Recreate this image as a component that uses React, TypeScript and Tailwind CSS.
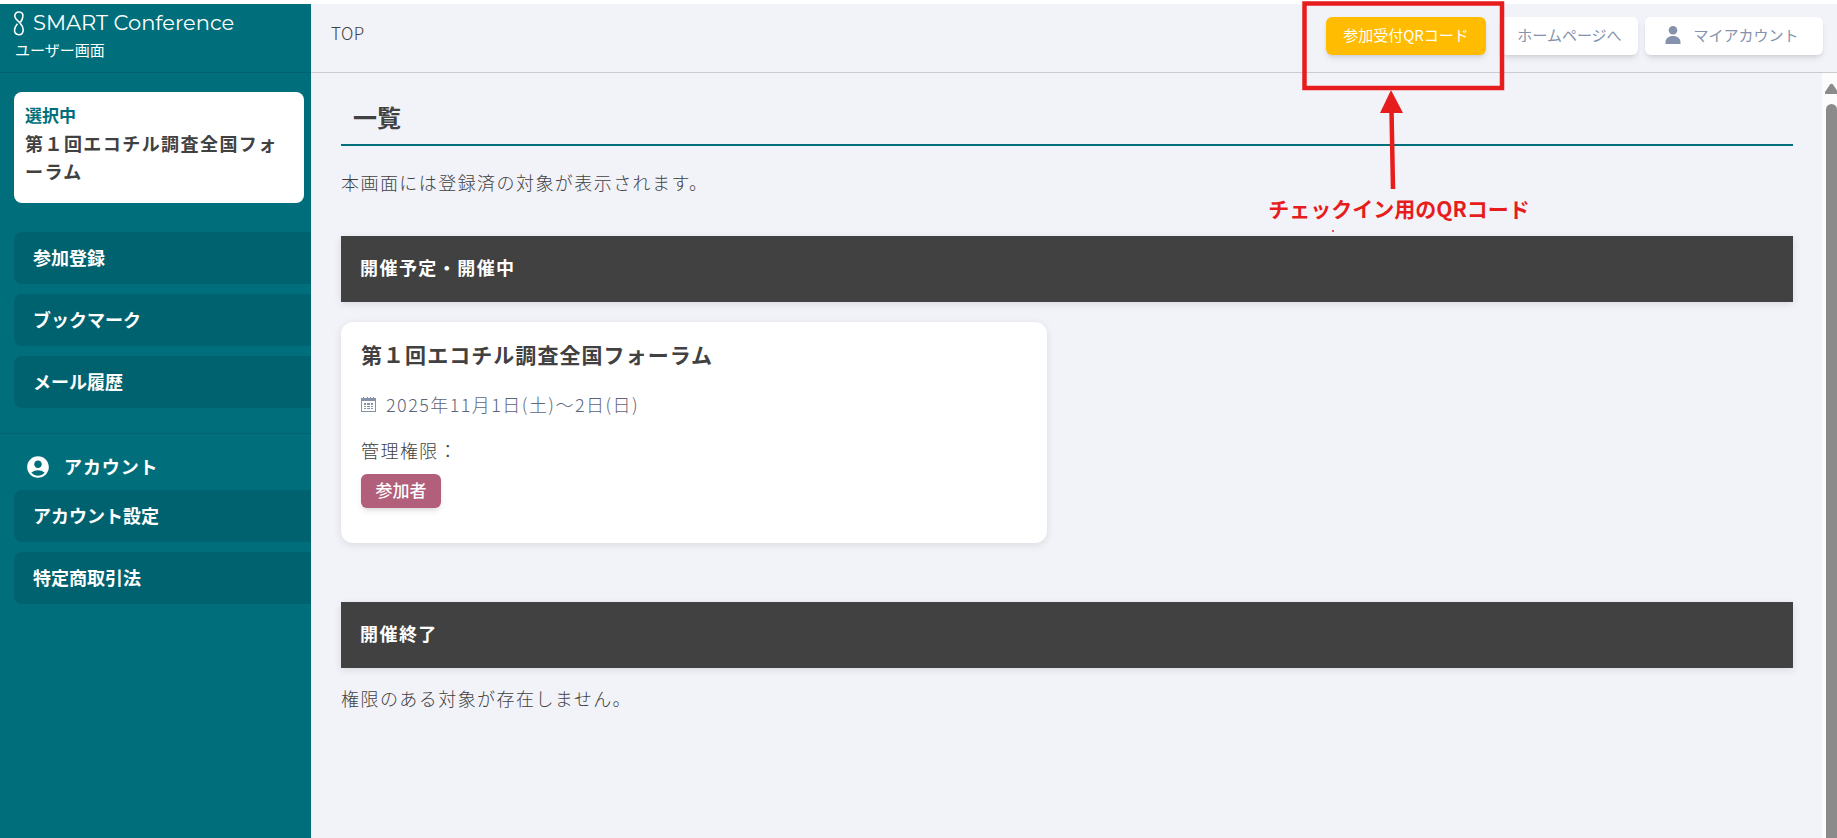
import { MdAccountCircle } from "react-icons/md";

const mainMenu = ["参加登録", "ブックマーク", "メール履歴"];
const accountMenu = ["アカウント設定", "特定商取引法"];

function LogoMark() {
  return (
    <svg width="12" height="25" viewBox="0 0 12 25" fill="none" stroke="white" strokeWidth="1.6">
      <path d="M9.800 5.800C10.400 2.800 8.800 1 6 1S1.500 2.800 1.800 5.500c0.300 2.700 3.200 4.300 5.200 6.500 1.900 2.100 3.200 4.200 3.200 6.700 0 3-1.800 5-4.400 5s-4.300-1.800-4.300-4.600c0-2.500 1.300-4.300 2.900-6.300" />
      <path d="M7.500 11.200C8.800 9.500 9.600 7.700 9.800 5.800" />
    </svg>
  );
}

function PersonIcon() {
  return (
    <svg width="16" height="18" viewBox="0 0 16 18" fill="#8492ac">
      <ellipse cx="8" cy="4.300" rx="4.300" ry="4.300" />
      <path d="M0.500 18v-1.500C0.500 12.500 3.500 10 8 10s7.500 2.500 7.500 6.500V18z" />
    </svg>
  );
}

function CalendarIcon() {
  return (
    <svg width="15" height="15" viewBox="0 0 15 15">
      <path d="M0 1h2V0h1v1h3V0h1v1h2V0h1v1h2V0h1v1h2v14H0z" fill="#8492ac" />
      <path d="M1 4h13v10H1z" fill="white" />
      <path
        d="M3 6h2v2H3zM6 6h3v2H6zM10 6h2v2h-2zM3 9h2v1H3zM6 9h3v1H6zM10 9h2v1h-2zM3 11h2v1H3zM6 11h3v1H6zM10 11h2v1h-2z"
        fill="#8492ac"
      />
    </svg>
  );
}

function MenuLink({ label }: { label: string }) {
  return (
    <a href="#" className="flex h-[52px] items-center rounded-l-lg bg-[#00626f] pb-[2px] pl-[19px] text-lg font-bold text-white">
      {label}
    </a>
  );
}

function Sidebar() {
  return (
    <aside className="w-[311px] shrink-0 bg-[#006f7b] text-white">
      <div className="h-[69px] border-b border-[#00626f] pt-[6px] pl-[13px]">
        <div className="flex items-center gap-2">
          <LogoMark />
          <span className="font-[Montserrat,Lato,sans-serif] text-[21px] leading-[26px]">SMART Conference</span>
        </div>
        <p className="pt-[2px] pl-[2px] text-[15px] leading-6">ユーザー画面</p>
      </div>
      <div className="mt-[19px] mr-[7px] ml-[14px] h-[111px] rounded-lg bg-white px-[11px] pt-[9px]">
        <p className="text-[17px] leading-7 font-bold text-[#006f7b]">選択中</p>
        <p className="text-lg leading-7 font-bold tracking-[0.08em] text-[#414141] [line-break:anywhere]">
          第１回エコチル調査全国フォーラム
        </p>
      </div>
      <nav className="mt-[29px] flex flex-col gap-[10px] pl-[14px]">
        {mainMenu.map((label) => (
          <MenuLink key={label} label={label} />
        ))}
      </nav>
      <div className="mt-[25px] border-t border-[#00626f] pt-[17px] pl-[14px]">
        <h2 className="flex h-[39px] items-start gap-[13px] pt-[3px] pl-[11px] text-lg leading-6 font-bold tracking-wider">
          <MdAccountCircle size={26} />
          アカウント
        </h2>
        <nav className="flex flex-col gap-[10px]">
          {accountMenu.map((label) => (
            <MenuLink key={label} label={label} />
          ))}
        </nav>
      </div>
    </aside>
  );
}

function SectionTitle({ children }: { children: React.ReactNode }) {
  return (
    <h2 className="flex h-[66px] items-center bg-[#414141] pb-1 pl-[19px] text-lg font-bold tracking-[0.08em] text-white shadow-[0_2px_8px_rgba(0,0,0,0.1)]">
      {children}
    </h2>
  );
}

// red marker around the QR button, with an arrow and a caption
function QrNote() {
  return (
    <div className="pointer-events-none absolute top-0 right-[310px] flex w-[256px] flex-col items-center text-[#e71c1c]">
      <svg width="256" height="190" viewBox="0 0 256 190" className="shrink-0">
        <rect x="33.500" y="3.500" width="197.500" height="84.500" fill="none" stroke="currentColor" strokeWidth="4.500" />
        <path d="M120 90L132 113H109z" fill="currentColor" />
        <path d="M120.500 110L122 189" stroke="currentColor" strokeWidth="4.500" />
      </svg>
      <p className="text-[21px] leading-9 font-bold whitespace-nowrap">チェックイン用のQRコード</p>
      <span className="mt-1 mr-[132px] size-[2px] rounded-full bg-current" />
    </div>
  );
}

export default function App() {
  return (
    <div className="flex h-screen flex-col bg-white pt-1 font-['Noto_Sans_CJK_JP',sans-serif] text-[#414141]">
      <div className="flex min-h-0 flex-1">
        <Sidebar />
        <div className="flex min-w-0 flex-1 flex-col bg-[#f2f3f9]">
          <header className="flex h-[69px] shrink-0 items-start border-b border-[#cbcbd0] pt-[13px] pr-[14px] pl-5">
            <span className="flex-1 text-[17px] leading-8 font-light tracking-wide">TOP</span>
            <div className="flex gap-[7px] text-[15px] text-[#8492ac]">
              <button className="mr-2 h-[38px] w-[160px] rounded-md bg-[#ffbc00] pb-[2px] text-white shadow-md">
                参加受付QRコード
              </button>
              <button className="h-[38px] w-[137px] rounded-md bg-white pb-[2px] shadow-md">ホームページへ</button>
              <button className="flex h-[38px] w-[178px] items-center justify-center gap-3 rounded-md bg-white pr-1 pb-[2px] shadow-md">
                <PersonIcon />
                マイアカウント
              </button>
            </div>
          </header>
          <div className="flex min-h-0 flex-1">
            <main className="min-w-0 flex-1 overflow-hidden pr-[29px] pl-[30px]">
              <h1 className="mt-[22px] h-[51px] border-b-2 border-[#006f7b] pl-3 text-2xl leading-[44px] font-bold">一覧</h1>
              <p className="mt-5 text-lg leading-8 font-light tracking-[0.08em]">本画面には登録済の対象が表示されます。</p>
              <section className="mt-[38px]">
                <SectionTitle>開催予定・開催中</SectionTitle>
                <article className="mt-5 h-[221px] w-[calc(50%-20px)] rounded-xl bg-white px-5 pt-[14px] shadow-[0_2px_8px_rgba(0,0,0,0.1)]">
                  <h3 className="text-[21px] leading-9 font-bold tracking-wider">第１回エコチル調査全国フォーラム</h3>
                  <p className="mt-4 flex items-center gap-[10px] text-lg leading-8 font-light tracking-[0.08em] text-[#5d6678]">
                    <CalendarIcon />
                    2025年11月1日(土)～2日(日)
                  </p>
                  <p className="mt-[14px] text-lg leading-8 font-light tracking-[0.08em]">管理権限：</p>
                  <span className="mt-2 inline-flex h-[34px] w-[80px] items-center justify-center rounded-md bg-[#b15f7a] pb-[2px] text-[17px] font-medium text-white shadow-md">
                    参加者
                  </span>
                </article>
              </section>
              <section className="mt-[59px]">
                <SectionTitle>開催終了</SectionTitle>
                <p className="mt-[14px] text-lg leading-8 font-light tracking-[0.08em]">権限のある対象が存在しません。</p>
              </section>
            </main>
            <div className="flex w-[15px] shrink-0 flex-col items-end overflow-hidden bg-[#fcfcfc] pt-[10px]">
              <svg width="12" height="11" viewBox="0 0 12 11" fill="#8b8b8b">
                <path d="M0 9L5 1.500Q6.500 0 8 1.500L12 7.500V11H1Q-0.500 11 0 9z" />
              </svg>
              <div className="mt-[10px] w-[11px] flex-1 rounded-t-full bg-[#8b8b8b]" />
            </div>
          </div>
        </div>
      </div>
      <QrNote />
    </div>
  );
}
